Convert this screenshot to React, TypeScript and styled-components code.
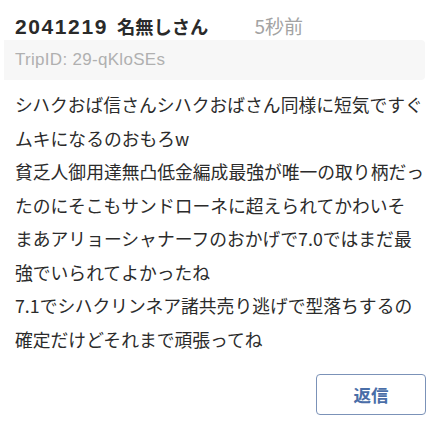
import React from 'react';
import styled, { createGlobalStyle } from 'styled-components';

const GlobalStyle = createGlobalStyle`
  html, body {
    margin: 0;
    padding: 0;
    background: #fff;
  }
  body {
    font-family: "Noto Sans CJK JP", "Noto Sans", sans-serif;
    color: #2b2b2b;
  }
`;

const Post = styled.article`
  width: 440px;
  height: 428px;
  box-sizing: border-box;
  padding: 12px 15px 0 4px;
  display: flex;
  flex-direction: column;
`;

const Header = styled.header`
  display: flex;
  align-items: baseline;
  gap: 46px;
  padding-left: 11px;
  height: 28px;
`;

const Title = styled.h1`
  margin: 0;
  font-size: 18.3px;
  font-weight: 700;
  line-height: 26px;
  color: #2a2a2a;
`;

const Number = styled.span`
  font-family: "Liberation Sans", "Noto Sans CJK JP", sans-serif;
  font-size: 21px;
  letter-spacing: 1.6px;
  margin-right: 9px;
`;

const Time = styled.span`
  font-size: 19px;
  color: #a3a3a3;
`;

const TripBar = styled.div`
  height: 40px;
  display: flex;
  align-items: center;
  padding-left: 11px;
  background: #f7f7f7;
  border-radius: 0 4px 4px 0;
  font-family: "Liberation Sans", "Noto Sans CJK JP", sans-serif;
  font-size: 17px;
  letter-spacing: 0.3px;
  color: #b0b0b0;
`;

const Body = styled.div`
  padding: 8px 0 0 11px;
  font-size: 17.8px;
  line-height: 33.5px;
  color: #2b2b2b;
  line-break: normal;
`;

const Line = styled.p`
  margin: 0;
`;

const Actions = styled.div`
  display: flex;
  justify-content: flex-end;
  margin-top: 18px;
`;

const ReplyButton = styled.button`
  width: 110px;
  height: 41px;
  border: 1.5px solid #7b92b8;
  border-radius: 4px;
  background: #fff;
  color: #4a6ea8;
  font-family: inherit;
  font-size: 17.5px;
  font-weight: 700;
  margin-right: -1px;
`;

const lines = [
  'シハクおば信さんシハクおばさん同様に短気ですぐムキになるのおもろw',
  '貧乏人御用達無凸低金編成最強が唯一の取り柄だったのにそこもサンドローネに超えられてかわいそ',
  'まあアリョーシャナーフのおかげで7.0ではまだ最強でいられてよかったね',
  '7.1でシハクリンネア諸共売り逃げで型落ちするの確定だけどそれまで頑張ってね',
];

export default function App() {
  return (
    <>
      <GlobalStyle />
      <Post>
        <Header>
          <Title>
            <Number>2041219</Number>名無しさん
          </Title>
          <Time>5秒前</Time>
        </Header>
        <TripBar>TripID: 29-qKloSEs</TripBar>
        <Body>
          {lines.map((text) => (
            <Line key={text}>{text}</Line>
          ))}
        </Body>
        <Actions>
          <ReplyButton type="button">返信</ReplyButton>
        </Actions>
      </Post>
    </>
  );
}
